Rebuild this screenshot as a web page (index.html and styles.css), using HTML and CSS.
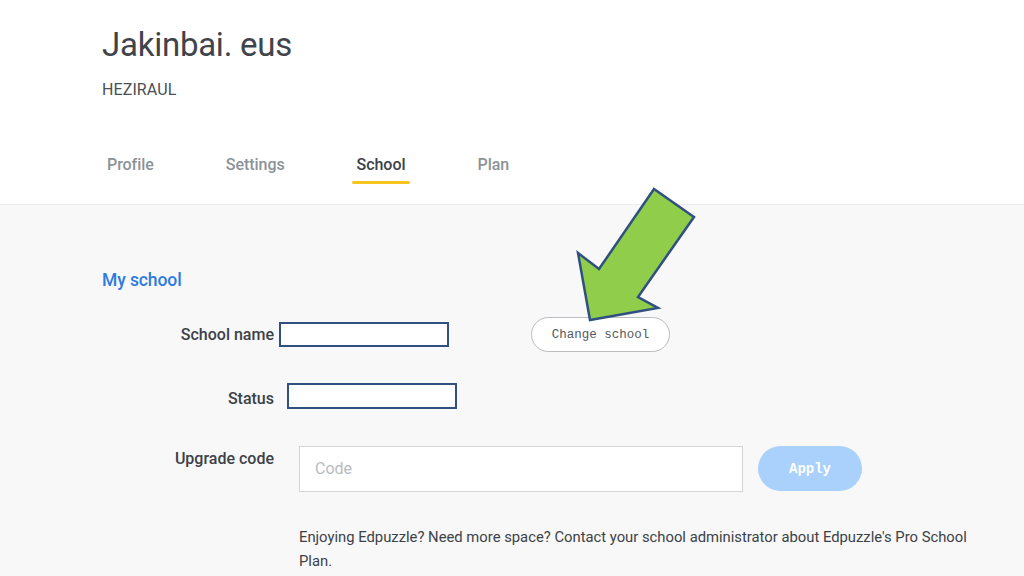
FILE: index.html
```html
<!DOCTYPE html>
<html>
<head>
<meta charset="utf-8">
<link rel="stylesheet" href="styles.css">
</head>
<body>
<header class="header">
  <h1 class="title">Jakinbai. eus</h1>
  <div class="role">HEZIRAUL</div>
  <nav class="tabs">
    <span class="tab">Profile</span>
    <span class="tab">Settings</span>
    <span class="tab active">School</span>
    <span class="tab">Plan</span>
  </nav>
</header>
<main class="content">
  <h2 class="section-title">My school</h2>
  <div class="row row-name">
    <span class="label">School name</span>
    <span class="box box-name"></span>
    <button class="btn-outline">Change school</button>
  </div>
  <div class="row row-status">
    <span class="label label-status">Status</span>
    <span class="box box-status"></span>
  </div>
  <div class="row row-code">
    <span class="label label-top">Upgrade code</span>
    <div class="code-input">Code</div>
    <button class="btn-apply">Apply</button>
  </div>
  <p class="note">Enjoying Edpuzzle? Need more space? Contact your school administrator about Edpuzzle's Pro School Plan.</p>
</main>
<svg class="arrow" width="1024" height="576" viewBox="0 0 1024 576">
  <polygon points="654,189 694,217 638,297 658,308 590,320 578,253 599,269" fill="#8fcd4b" stroke="#2f5080" stroke-width="2.5" stroke-linejoin="miter"/>
</svg>
</body>
</html>
```

FILE: styles.css
```css
* { box-sizing: border-box; }
html, body { margin: 0; padding: 0; }
body {
  width: 1024px;
  height: 576px;
  overflow: hidden;
  background: #f8f8f8;
  font-family: Roboto, "Liberation Sans", sans-serif;
  color: #3c4148;
  position: relative;
}
.header {
  background: #fff;
  height: 205px;
  border-bottom: 1px solid #ececec;
  padding: 25px 0 0 102px;
}
.title {
  margin: 0;
  font-size: 33px;
  line-height: 40px;
  font-weight: 400;
  color: #3f444b;
  letter-spacing: -0.25px;
}
.role {
  margin-top: 15px;
  font-size: 16px;
  line-height: 20px;
  color: #4a4f55;
  letter-spacing: 0.1px;
}
.tabs {
  margin-top: 55px;
  display: flex;
  gap: 62px;
}
.tab {
  position: relative;
  padding: 0 5px;
  font-size: 16px;
  line-height: 20px;
  color: #8c9298;
  font-weight: 500;
  letter-spacing: -0.05px;
}
.tab.active { color: #3c4148; }
.tab.active::after {
  content: "";
  position: absolute;
  left: 0;
  right: 0;
  top: 26px;
  height: 3px;
  border-radius: 2px;
  background: #f7c51e;
}
.content {
  padding: 63px 0 0 102px;
}
.section-title {
  margin: 0;
  font-size: 17.5px;
  line-height: 24px;
  font-weight: 500;
  color: #2c7be0;
  letter-spacing: -0.1px;
}
.row {
  display: flex;
  align-items: center;
}
.label {
  width: 172px;
  text-align: right;
  font-size: 16px;
  line-height: 20px;
  font-weight: 500;
  color: #3c4148;
}
.row-name { margin-top: 25px; height: 35px; }
.row-status { margin-top: 31px; height: 26px; }
.label-status { margin-top: 6px; }
.row-code { margin-top: 37px; align-items: flex-start; }
.label-top { margin-top: 3px; }
.box {
  display: block;
  height: 26px;
  width: 170px;
  background: #fff;
  border: 2.5px solid #2f5080;
}
.box-name { margin-left: 5px; height: 25px; }
.box-status { margin-left: 13px; }
.btn-outline {
  margin-left: 82px;
  width: 139px;
  height: 35px;
  border-radius: 18px;
  border: 1px solid #b9bcc0;
  background: #fff;
  font-family: "Liberation Mono", monospace;
  font-size: 12.5px;
  color: #55595e;
  padding: 0;
}
.code-input {
  margin-left: 25px;
  width: 444px;
  height: 46px;
  background: #fff;
  border: 1px solid #d3d5d8;
  padding: 0 15px;
  line-height: 44px;
  font-size: 16px;
  color: #b8bcc1;
}
.btn-apply {
  margin-left: 15px;
  width: 104px;
  height: 45px;
  border-radius: 23px;
  border: none;
  background: #a9d1fb;
  color: #fff;
  font-family: "Liberation Mono", monospace;
  font-weight: 700;
  font-size: 14px;
  padding: 0;
}
.note {
  margin: 33px 0 0 197px;
  width: 680px;
  font-size: 14.8px;
  line-height: 24px;
  color: #3c4148;
}
.arrow {
  position: absolute;
  left: 0;
  top: 0;
  pointer-events: none;
}
```
